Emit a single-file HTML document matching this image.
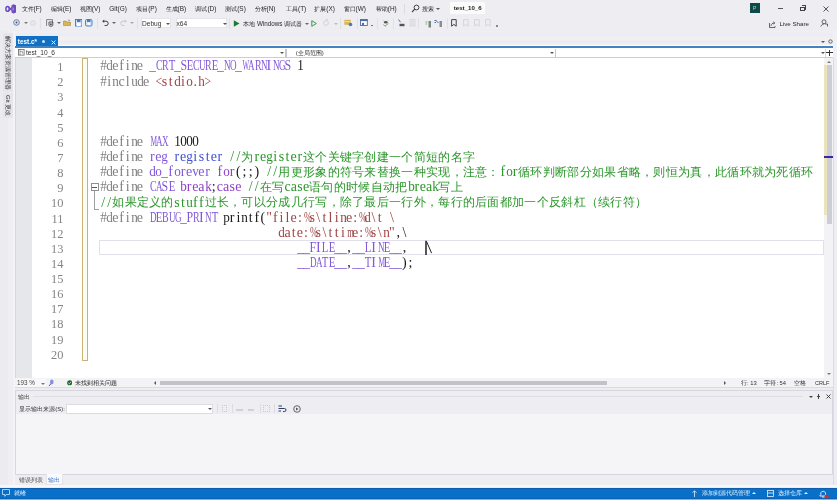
<!DOCTYPE html>
<html><head><meta charset="utf-8">
<style>
*{margin:0;padding:0;box-sizing:border-box}
html,body{width:837px;height:500px;overflow:hidden;background:#eeeef2;font-family:"Liberation Sans",sans-serif;position:relative}
body{filter:blur(0.4px)}
.a{position:absolute}
.t{position:absolute;white-space:nowrap;font-size:6px;line-height:8px;color:#3a3a3a}
.cl{position:absolute;left:100px;height:15px;width:730px}
.la{position:absolute;top:-1.8px;font-family:"Liberation Serif",serif;font-size:14px;line-height:15px;white-space:pre}
.la i{font-style:normal;display:inline-block;width:6.15px;text-align:center}
.la i.n{transform:scaleX(0.78)}
.cj{position:absolute;top:0;font-family:"Liberation Mono",monospace;font-size:12.3px;letter-spacing:0.3px;line-height:15px;white-space:pre}
.nm{position:absolute;left:32px;width:31.5px;height:15px;line-height:15px;text-align:right;font-family:"Liberation Serif",serif;font-size:12.4px;color:#858585}
.sep{position:absolute;width:1px;background:#dcdde3}
.dd{position:absolute;width:0;height:0;border-left:2px solid transparent;border-right:2px solid transparent;border-top:2.6px solid #555}
</style></head><body>
<!-- ===== menu bar ===== -->
<svg class="a" style="left:5px;top:4px" width="12" height="10" viewBox="0 0 12 10">
<ellipse cx="2.6" cy="4.9" rx="1.7" ry="2.4" fill="none" stroke="#6c4cc0" stroke-width="1.5"/>
<path d="M3.5 3.2 L7 6.2 M3.5 6.6 L7 3.6" stroke="#6c4cc0" stroke-width="1.4"/>
<path d="M6.5 1.3 L8.6 0.2 L11 1.3 V8.5 L8.6 9.6 L6.5 8.5 Z" fill="#6c4cc0"/>
<ellipse cx="8.2" cy="5" rx="0.9" ry="1.8" fill="#9c82e0"/>
</svg>
<div class="t" style="left:21.5px;top:4.7px;font-size:6.45px;color:#262626">文件(F)</div>
<div class="t" style="left:50.8px;top:4.7px;font-size:6.45px;color:#262626">编辑(E)</div>
<div class="t" style="left:79.8px;top:4.7px;font-size:6.45px;color:#262626">视图(V)</div>
<div class="t" style="left:109.3px;top:4.7px;font-size:6.45px;color:#262626">Git(G)</div>
<div class="t" style="left:136.2px;top:4.7px;font-size:6.45px;color:#262626">项目(P)</div>
<div class="t" style="left:165.5px;top:4.7px;font-size:6.45px;color:#262626">生成(B)</div>
<div class="t" style="left:195.4px;top:4.7px;font-size:6.45px;color:#262626">调试(D)</div>
<div class="t" style="left:225.2px;top:4.7px;font-size:6.45px;color:#262626">测试(S)</div>
<div class="t" style="left:254.5px;top:4.7px;font-size:6.45px;color:#262626">分析(N)</div>
<div class="t" style="left:286px;top:4.7px;font-size:6.45px;color:#262626">工具(T)</div>
<div class="t" style="left:314.3px;top:4.7px;font-size:6.45px;color:#262626">扩展(X)</div>
<div class="t" style="left:343.5px;top:4.7px;font-size:6.45px;color:#262626">窗口(W)</div>
<div class="t" style="left:375.8px;top:4.7px;font-size:6.45px;color:#262626">帮助(H)</div>
<div class="sep" style="left:403.5px;top:4px;height:10px"></div>
<svg class="a" style="left:411px;top:4px" width="9" height="9" viewBox="0 0 9 9"><circle cx="5.5" cy="3.5" r="2.4" fill="none" stroke="#444" stroke-width="1"/><path d="M3.8 5.2 L1 8" stroke="#444" stroke-width="1.1"/></svg>
<div class="t" style="left:421.6px;top:4.7px;font-size:6.45px;color:#262626">搜索</div>
<div class="dd" style="left:436px;top:8px"></div>
<div class="a" style="left:450px;top:2px;width:35px;height:12px;background:#fbfbfc;border-radius:1px"></div>
<div class="t" style="left:453.8px;top:4px;font-weight:bold;color:#1a1a1a;font-size:6.1px">test_10_6</div>
<div class="a" style="left:749.5px;top:3px;width:10px;height:9.5px;background:#0d4a47"></div>
<div class="t" style="left:752.8px;top:4px;color:#a8cccc;font-size:5.5px">P</div>
<div class="a" style="left:777.5px;top:7.5px;width:5.5px;height:0.9px;background:#555"></div>
<div class="a" style="left:800px;top:6.5px;width:4.5px;height:4.5px;border:1px solid #444"></div>
<div class="a" style="left:801.5px;top:5.2px;width:4.5px;height:4.5px;border-top:1px solid #444;border-right:1px solid #444"></div>
<svg class="a" style="left:822.5px;top:5.5px" width="6" height="6" viewBox="0 0 6 6"><path d="M0.5 0.5 L5.5 5.5 M5.5 0.5 L0.5 5.5" stroke="#444" stroke-width="0.9"/></svg>

<!-- ===== toolbar ===== -->
<svg class="a" style="left:12.8px;top:19.3px" width="7" height="7" viewBox="0 0 7 7"><circle cx="3.5" cy="3.5" r="2.8" fill="#dde6f3" stroke="#60749e" stroke-width="0.9"/><circle cx="3.5" cy="3.5" r="0.9" fill="#3a4f7a"/></svg>
<div class="dd" style="left:23.5px;top:22px;border-top-color:#777"></div>
<svg class="a" style="left:30px;top:19.5px" width="6" height="6" viewBox="0 0 6 6"><circle cx="3" cy="3" r="2.5" fill="#e8e8ec" stroke="#d4d4da" stroke-width="0.8"/></svg>
<div class="sep" style="left:40px;top:18px;height:11px;background:#e0e0e6"></div>
<svg class="a" style="left:46px;top:19px" width="8" height="8" viewBox="0 0 8 8"><path d="M0.6 0.6 H6.5 V4" fill="none" stroke="#777" stroke-width="0.9"/><path d="M0.6 0.6 V7" stroke="#777" stroke-width="0.9"/><path d="M3 3 H6.8 V6.5 C6.8 7.4 3 7.4 3 6.5 Z" fill="none" stroke="#444" stroke-width="0.9"/><circle cx="4.9" cy="5.2" r="0.9" fill="#444"/></svg>
<div class="dd" style="left:57px;top:22px;border-top-color:#666"></div>
<svg class="a" style="left:63px;top:19px" width="8" height="7" viewBox="0 0 8 7"><path d="M0.5 2 H3 L3.8 3 H7.5 V6.5 H0.5 Z" fill="#d8b650" stroke="#9b7e2a" stroke-width="0.5"/><path d="M5 1 L7 1.5" stroke="#5a83c6" stroke-width="0.8"/></svg>
<svg class="a" style="left:74.5px;top:19px" width="7.5" height="7.5" viewBox="0 0 7.5 7.5"><rect x="0.5" y="0.5" width="6.5" height="6.5" fill="#cfe1f5" stroke="#3c78c4" stroke-width="0.9"/><rect x="2" y="0.5" width="3.5" height="2.4" fill="#3c78c4"/><rect x="1.8" y="4.2" width="3.9" height="2.8" fill="#fff"/></svg>
<svg class="a" style="left:85.2px;top:19px" width="7.5" height="7.5" viewBox="0 0 7.5 7.5"><rect x="0.5" y="0.5" width="6.5" height="6.5" rx="1.2" fill="#cfe1f5" stroke="#3c78c4" stroke-width="0.9"/><rect x="2" y="0.5" width="3.5" height="2.4" fill="#3c78c4"/><circle cx="3.8" cy="4.8" r="1.3" fill="#fff"/></svg>
<div class="sep" style="left:96.5px;top:18px;height:11px;background:#e0e0e6"></div>
<svg class="a" style="left:101.5px;top:19px" width="7" height="7" viewBox="0 0 7 7"><path d="M1.2 2.2 H4 A2.2 2.2 0 0 1 4 6.6 H2.5" fill="none" stroke="#444" stroke-width="1"/><path d="M0.2 2.2 L2.2 0.4 V4 Z" fill="#444"/></svg>
<div class="dd" style="left:112px;top:22px;border-top-color:#666"></div>
<svg class="a" style="left:119.5px;top:19px" width="7" height="7" viewBox="0 0 7 7"><path d="M5.8 2.2 H3 A2.2 2.2 0 0 0 3 6.6 H4.5" fill="none" stroke="#c8c8cc" stroke-width="1"/><path d="M6.8 2.2 L4.8 0.4 V4 Z" fill="#c8c8cc"/></svg>
<div class="dd" style="left:129.5px;top:22px;border-top-color:#aaa"></div>
<div class="sep" style="left:136.5px;top:18px;height:11px;background:#e0e0e6"></div>
<div class="a" style="left:141px;top:18px;width:30px;height:10px;background:#fff;border:1px solid #e4e4ea"></div>
<div class="t" style="left:142px;top:19.5px;font-size:6.6px;line-height:8px;color:#333">Debug</div>
<div class="dd" style="left:166px;top:22.5px"></div>
<div class="a" style="left:175.5px;top:18px;width:51.5px;height:10px;background:#fff;border:1px solid #e4e4ea"></div>
<div class="t" style="left:176.5px;top:19.5px;font-size:6.6px;line-height:8px;color:#333">x64</div>
<div class="dd" style="left:222.5px;top:22.5px"></div>
<div class="sep" style="left:229px;top:18px;height:11px;background:#e0e0e6"></div>
<svg class="a" style="left:233px;top:19.5px" width="7" height="7" viewBox="0 0 7 7"><path d="M0.8 0.3 L6.5 3.5 L0.8 6.7 Z" fill="#1f7a30"/></svg>
<div class="t" style="left:243.2px;top:19.5px;color:#2a2a2a;font-size:6.3px">本地 Windows 调试器</div>
<div class="dd" style="left:305px;top:22.5px;border-top-color:#666"></div>
<svg class="a" style="left:311px;top:19.5px" width="6" height="7" viewBox="0 0 6 7"><path d="M0.8 0.7 L5.3 3.5 L0.8 6.3 Z" fill="none" stroke="#2e8b3e" stroke-width="0.9"/></svg>
<svg class="a" style="left:322.5px;top:19px" width="7" height="7" viewBox="0 0 7 7"><circle cx="3" cy="4" r="2.4" fill="none" stroke="#d0d0d4" stroke-width="0.9"/><path d="M3 0.5 L5 0.5" stroke="#d0d0d4" stroke-width="0.9"/></svg>
<div class="dd" style="left:334px;top:22.5px;border-top-color:#bbb"></div>
<div class="sep" style="left:340px;top:18px;height:11px;background:#e0e0e6"></div>
<svg class="a" style="left:344px;top:19px" width="8.5" height="7.5" viewBox="0 0 8.5 7.5"><rect x="0.3" y="0.8" width="6.5" height="5" fill="#d8b650"/><rect x="0.3" y="2.2" width="6.5" height="1" fill="#f0dca0"/><circle cx="6.5" cy="5.5" r="1.8" fill="#4a78c0"/></svg>
<div class="sep" style="left:356.5px;top:18px;height:11px;background:#e0e0e6"></div>
<svg class="a" style="left:359.5px;top:19px" width="8" height="7.5" viewBox="0 0 8 7.5"><rect x="0.5" y="0.5" width="6.8" height="6" fill="#fff" stroke="#4c6aa8" stroke-width="0.9"/><rect x="0.5" y="0.5" width="6.8" height="1.6" fill="#4c6aa8"/><circle cx="3" cy="5" r="1.2" fill="#4c6aa8"/></svg>
<div class="a" style="left:371px;top:25px;width:2px;height:1px;background:#777"></div>
<div class="sep" style="left:377px;top:18px;height:11px;background:#e0e0e6"></div>
<svg class="a" style="left:381.5px;top:19px" width="7.5" height="8.5" viewBox="0 0 7.5 8.5"><path d="M1.5 1.5 L2.5 2.5 M6 1.5 L5 2.5" stroke="#777" stroke-width="0.6"/><ellipse cx="3.75" cy="3.2" rx="1.8" ry="1.3" fill="#555"/><path d="M1.5 5.5 L3 7.3 L6.5 4.3" stroke="#5aa05a" stroke-width="0.9" fill="none"/></svg>
<div class="sep" style="left:392.5px;top:18px;height:11px;background:#e0e0e6"></div>
<svg class="a" style="left:397px;top:19px" width="8" height="8" viewBox="0 0 8 8"><path d="M1.5 0.5 L3.5 3.2" stroke="#3c70c0" stroke-width="1"/><rect x="2.5" y="4.8" width="5" height="2.4" fill="#555"/></svg>
<svg class="a" style="left:408.5px;top:19px" width="7" height="7.5" viewBox="0 0 7 7.5"><path d="M1 0.5 H3 V7 H1 Z M4 0.5 H6 V7 H4 Z" fill="none" stroke="#d2d2d8" stroke-width="0.8"/></svg>
<div class="sep" style="left:418px;top:18px;height:11px;background:#e0e0e6"></div>
<svg class="a" style="left:424.5px;top:19.5px" width="7" height="8" viewBox="0 0 7 8"><path d="M0.5 2 H2.5 M0.5 4 H2" stroke="#7ab07a" stroke-width="1"/><path d="M3.5 1 H6 V7.5 H3.5 Z" fill="#7a8a7a"/></svg>
<svg class="a" style="left:434px;top:19px" width="9" height="8.5" viewBox="0 0 9 8.5"><path d="M0.5 1.5 H2.5 M0.5 3.5 H2 M2 1.5 L4.5 4" stroke="#4a70b0" stroke-width="1"/><path d="M5.5 2 H8 V8 H5.5 Z" fill="#8a8a92"/></svg>
<div class="sep" style="left:446.5px;top:18px;height:11px;background:#e0e0e6"></div>
<svg class="a" style="left:450.5px;top:19px" width="6" height="8" viewBox="0 0 6 8"><path d="M0.6 0.6 H5.2 V7.2 L2.9 5.4 L0.6 7.2 Z" fill="none" stroke="#444" stroke-width="1"/></svg>
<svg class="a" style="left:462.5px;top:19px" width="7" height="8" viewBox="0 0 7 8"><path d="M0.6 0.6 H5.2 V7.2 L2.9 5.4 L0.6 7.2 Z" fill="none" stroke="#d4d4da" stroke-width="1"/></svg>
<svg class="a" style="left:473.5px;top:19px" width="7" height="8" viewBox="0 0 7 8"><path d="M0.6 0.6 H5.2 V7.2 L2.9 5.4 L0.6 7.2 Z" fill="none" stroke="#d4d4da" stroke-width="1"/></svg>
<svg class="a" style="left:484.5px;top:19px" width="7" height="8" viewBox="0 0 7 8"><path d="M0.6 0.6 H5.2 V7.2 L2.9 5.4 L0.6 7.2 Z" fill="none" stroke="#d4d4da" stroke-width="1"/></svg>
<div class="a" style="left:495.5px;top:25px;width:2px;height:1.5px;background:#888"></div>
<!-- live share -->
<svg class="a" style="left:769px;top:20.5px" width="7" height="7" viewBox="0 0 7 7"><path d="M0.5 2 V6.5 H6 V5" fill="none" stroke="#444" stroke-width="0.8"/><path d="M2 5 C2 3 3.5 2 5.5 2 M4.3 0.8 L5.8 2 L4.3 3.2" fill="none" stroke="#444" stroke-width="0.8"/></svg>
<div class="t" style="left:779.4px;top:20px;color:#2a2a2a;font-size:6.2px">Live Share</div>
<svg class="a" style="left:819.5px;top:19px" width="8" height="8" viewBox="0 0 8 8"><circle cx="4" cy="2.8" r="2" fill="none" stroke="#444" stroke-width="0.8"/><path d="M0.8 7.5 C1.5 5.5 3 5 4 5" fill="none" stroke="#444" stroke-width="0.8"/><path d="M5 5 H7.5 V7.5" fill="none" stroke="#444" stroke-width="0.8"/></svg>

<!-- ===== tab well ===== -->
<div class="a" style="left:15px;top:31px;width:819px;height:15px;background:linear-gradient(#eeeef3 0,#eeeef3 1.5px,#e8edf6 2.5px,#e8edf6 5px,#f5efea 6px,#f5efea 9px,#e7eef8 10px,#e7eef8 11.5px,#f6efe9 12px,#f6efe9 13.5px,#fbfbfd 14px)"></div>
<div class="a" style="left:16px;top:36px;width:42px;height:10px;background:#1170c4"></div>
<div class="t" style="left:17.8px;top:38px;color:#fff;font-weight:bold;font-size:6.4px">test.c*</div>
<div class="a" style="left:42.3px;top:40.3px;width:3.2px;height:3.2px;border-radius:50%;background:#cfe2f6"></div>
<svg class="a" style="left:50.5px;top:39.8px" width="5" height="5" viewBox="0 0 5 5"><path d="M0.6 0.6 L4.4 4.4 M4.4 0.6 L0.6 4.4" stroke="#e8f2fb" stroke-width="1"/></svg>
<div class="dd" style="left:820.5px;top:41px;border-top-color:#555"></div>
<svg class="a" style="left:828px;top:38.5px" width="5" height="5" viewBox="0 0 5 5"><circle cx="2.5" cy="2.5" r="1.7" fill="none" stroke="#666" stroke-width="1"/></svg>
<div class="a" style="left:15px;top:46px;width:819px;height:2px;background:#4383c2"></div>

<!-- ===== nav bar ===== -->
<div class="a" style="left:15px;top:48px;width:819px;height:10px;background:#fff;border-bottom:1.3px solid #cdcdd5"></div>
<svg class="a" style="left:18px;top:49.3px" width="6.5" height="6.5" viewBox="0 0 6.5 6.5"><rect x="0.4" y="0.4" width="5.7" height="5.7" fill="none" stroke="#666" stroke-width="0.8"/><path d="M2 0.4 V6 M2 2.6 H4.5 V4.5" stroke="#666" stroke-width="0.6" fill="none"/></svg>
<div class="t" style="left:26px;top:49px;color:#333;font-size:6.6px">test_10_6</div>
<div class="dd" style="left:280px;top:52px"></div>
<div class="sep" style="left:285px;top:48.5px;width:1.5px;height:8.5px;background:#c6c6ce"></div>
<div class="t" style="left:295.8px;top:49px;color:#333">(全局范围)</div>
<div class="dd" style="left:549.5px;top:52px"></div>
<div class="sep" style="left:554.8px;top:48.5px;width:1.5px;height:8.5px;background:#c6c6ce"></div>
<div class="dd" style="left:820.5px;top:52px"></div>
<div class="sep" style="left:825px;top:48.5px;height:8.5px;background:#d6d7de"></div>
<div class="a" style="left:826.3px;top:51.9px;width:6.4px;height:1.6px;background:#333"></div>
<div class="a" style="left:828.7px;top:49.5px;width:1.6px;height:6.4px;background:#333"></div>

<!-- ===== left sidebar ===== -->
<div class="a" style="left:0;top:31px;width:15px;height:456px;background:#ececf0"></div>
<div class="a" style="left:8px;top:31px;width:5px;height:456px;background:#efeff3"></div><div class="a" style="left:12.5px;top:31px;width:2.5px;height:456px;background:#f4f4f7"></div>
<div class="a" style="left:3px;top:33px;width:10px;height:59px;background:#e5e5eb"></div><div class="a" style="left:3px;top:93px;width:10px;height:25px;background:#e5e5eb"></div>
<div class="t" style="left:11px;top:35.5px;transform-origin:0 0;transform:rotate(90deg);font-size:6.1px;line-height:6px;color:#333">解决方案资源管理器</div>
<div class="t" style="left:11px;top:95px;transform-origin:0 0;transform:rotate(90deg);font-size:6.1px;line-height:6px;color:#333">Git 更改</div>

<!-- ===== editor ===== -->
<div class="a" style="left:15px;top:58px;width:809px;height:320px;background:#fff;border-left:1px solid #d6d7de"></div>
<div class="a" style="left:16px;top:58px;width:15.5px;height:320px;background:#e6e7ea"></div>
<div class="nm" style="top:60.20px">1</div><div class="nm" style="top:75.33px">2</div><div class="nm" style="top:90.46px">3</div><div class="nm" style="top:105.59px">4</div><div class="nm" style="top:120.72px">5</div><div class="nm" style="top:135.85px">6</div><div class="nm" style="top:150.98px">7</div><div class="nm" style="top:166.11px">8</div><div class="nm" style="top:181.24px">9</div><div class="nm" style="top:196.37px">10</div><div class="nm" style="top:211.50px">11</div><div class="nm" style="top:226.63px">12</div><div class="nm" style="top:241.76px">13</div><div class="nm" style="top:256.89px">14</div><div class="nm" style="top:272.02px">15</div><div class="nm" style="top:287.15px">16</div><div class="nm" style="top:302.28px">17</div><div class="nm" style="top:317.41px">18</div><div class="nm" style="top:332.54px">19</div><div class="nm" style="top:347.67px">20</div>
<div class="a" style="left:82.2px;top:58px;width:6px;height:302.5px;border:1.6px solid #c9b272;background:#fdfcf6"></div>
<!-- outline -->
<div class="a" style="left:90.5px;top:183px;width:8px;height:8px;border:1px solid #8f8f8f;background:#fff"></div>
<div class="a" style="left:92.2px;top:186.5px;width:4.5px;height:1px;background:#555"></div>
<div class="a" style="left:94px;top:191px;width:1px;height:18px;background:#a0a0a0"></div>
<div class="a" style="left:94px;top:208.5px;width:4.5px;height:1px;background:#a0a0a0"></div>
<!-- current line -->
<div class="a" style="left:99px;top:240px;width:724.5px;height:15px;border:1.5px solid #e0e0ea"></div>
<div class="cl" style="top:60.20px"><span class="la" style="left:0.00px;color:#808080"><i style="transform:scaleX(0.94)">#</i><i style="transform:scaleX(0.94)">d</i><i>e</i><i>f</i><i>i</i><i style="transform:scaleX(0.94)">n</i><i>e</i><i> </i></span><span class="la" style="left:49.20px;color:#8258d8"><i style="transform:scaleX(0.94)">_</i><i style="transform:scaleX(0.71)">C</i><i style="transform:scaleX(0.71)">R</i><i style="transform:scaleX(0.77)">T</i><i style="transform:scaleX(0.94)">_</i><i style="transform:scaleX(0.85)">S</i><i style="transform:scaleX(0.77)">E</i><i style="transform:scaleX(0.71)">C</i><i style="transform:scaleX(0.65)">U</i><i style="transform:scaleX(0.71)">R</i><i style="transform:scaleX(0.77)">E</i><i style="transform:scaleX(0.94)">_</i><i style="transform:scaleX(0.65)">N</i><i style="transform:scaleX(0.65)">O</i><i style="transform:scaleX(0.94)">_</i><i style="transform:scaleX(0.50)">W</i><i style="transform:scaleX(0.65)">A</i><i style="transform:scaleX(0.71)">R</i><i style="transform:scaleX(0.65)">N</i><i>I</i><i style="transform:scaleX(0.65)">N</i><i style="transform:scaleX(0.65)">G</i><i style="transform:scaleX(0.85)">S</i></span><span class="la" style="left:190.65px;color:#1a1a1a"><i> </i><i style="transform:scaleX(0.94)">1</i></span></div>
<div class="cl" style="top:75.33px"><span class="la" style="left:0.00px;color:#808080"><i style="transform:scaleX(0.94)">#</i><i>i</i><i style="transform:scaleX(0.94)">n</i><i>c</i><i>l</i><i style="transform:scaleX(0.94)">u</i><i style="transform:scaleX(0.94)">d</i><i>e</i><i> </i></span><span class="la" style="left:55.35px;color:#a04444"><i style="transform:scaleX(0.84)">&lt;</i><i>s</i><i>t</i><i style="transform:scaleX(0.94)">d</i><i>i</i><i style="transform:scaleX(0.94)">o</i><i>.</i><i style="transform:scaleX(0.94)">h</i><i style="transform:scaleX(0.84)">&gt;</i></span></div>
<div class="cl" style="top:90.46px"></div>
<div class="cl" style="top:105.59px"></div>
<div class="cl" style="top:120.72px"></div>
<div class="cl" style="top:135.85px"><span class="la" style="left:0.00px;color:#808080"><i style="transform:scaleX(0.94)">#</i><i style="transform:scaleX(0.94)">d</i><i>e</i><i>f</i><i>i</i><i style="transform:scaleX(0.94)">n</i><i>e</i><i> </i></span><span class="la" style="left:49.20px;color:#8258d8"><i style="transform:scaleX(0.53)">M</i><i style="transform:scaleX(0.65)">A</i><i style="transform:scaleX(0.65)">X</i></span><span class="la" style="left:67.65px;color:#1a1a1a"><i> </i><i style="transform:scaleX(0.94)">1</i><i style="transform:scaleX(0.94)">0</i><i style="transform:scaleX(0.94)">0</i><i style="transform:scaleX(0.94)">0</i></span></div>
<div class="cl" style="top:150.98px"><span class="la" style="left:0.00px;color:#808080"><i style="transform:scaleX(0.94)">#</i><i style="transform:scaleX(0.94)">d</i><i>e</i><i>f</i><i>i</i><i style="transform:scaleX(0.94)">n</i><i>e</i><i> </i></span><span class="la" style="left:49.20px;color:#8258d8"><i>r</i><i>e</i><i style="transform:scaleX(0.94)">g</i></span><span class="la" style="left:73.80px;color:#4050d0"><i>r</i><i>e</i><i style="transform:scaleX(0.94)">g</i><i>i</i><i>s</i><i>t</i><i>e</i><i>r</i></span><span class="la" style="left:123.00px;color:#2a962a"><i> </i><i>/</i><i>/</i></span><span class="cj" style="left:141.45px;color:#2a962a">为</span><span class="la" style="left:153.75px;color:#2a962a"><i>r</i><i>e</i><i style="transform:scaleX(0.94)">g</i><i>i</i><i>s</i><i>t</i><i>e</i><i>r</i></span><span class="cj" style="left:202.95px;color:#2a962a">这个关键字创建一个简短的名字</span></div>
<div class="cl" style="top:166.11px"><span class="la" style="left:0.00px;color:#808080"><i style="transform:scaleX(0.94)">#</i><i style="transform:scaleX(0.94)">d</i><i>e</i><i>f</i><i>i</i><i style="transform:scaleX(0.94)">n</i><i>e</i><i> </i></span><span class="la" style="left:49.20px;color:#8258d8"><i style="transform:scaleX(0.94)">d</i><i style="transform:scaleX(0.94)">o</i><i style="transform:scaleX(0.94)">_</i><i>f</i><i style="transform:scaleX(0.94)">o</i><i>r</i><i>e</i><i style="transform:scaleX(0.94)">v</i><i>e</i><i>r</i></span><span class="la" style="left:116.85px;color:#9040c8"><i>f</i><i style="transform:scaleX(0.94)">o</i><i>r</i></span><span class="la" style="left:135.30px;color:#1a1a1a"><i>(</i><i>;</i><i>;</i><i>)</i></span><span class="la" style="left:159.90px;color:#2a962a"><i> </i><i>/</i><i>/</i></span><span class="cj" style="left:178.35px;color:#2a962a">用更形象的符号来替换一种实现，注意：</span><span class="la" style="left:399.75px;color:#2a962a"><i>f</i><i style="transform:scaleX(0.94)">o</i><i>r</i></span><span class="cj" style="left:418.20px;color:#2a962a">循环判断部分如果省略，则恒为真，此循环就为死循环</span></div>
<div class="cl" style="top:181.24px"><span class="la" style="left:0.00px;color:#808080"><i style="transform:scaleX(0.94)">#</i><i style="transform:scaleX(0.94)">d</i><i>e</i><i>f</i><i>i</i><i style="transform:scaleX(0.94)">n</i><i>e</i><i> </i></span><span class="la" style="left:49.20px;color:#8258d8"><i style="transform:scaleX(0.71)">C</i><i style="transform:scaleX(0.65)">A</i><i style="transform:scaleX(0.85)">S</i><i style="transform:scaleX(0.77)">E</i></span><span class="la" style="left:79.95px;color:#9040c8"><i style="transform:scaleX(0.94)">b</i><i>r</i><i>e</i><i>a</i><i style="transform:scaleX(0.94)">k</i></span><span class="la" style="left:110.70px;color:#1a1a1a"><i>;</i></span><span class="la" style="left:116.85px;color:#9040c8"><i>c</i><i>a</i><i>s</i><i>e</i></span><span class="la" style="left:141.45px;color:#2a962a"><i> </i><i>/</i><i>/</i></span><span class="cj" style="left:159.90px;color:#2a962a">在写</span><span class="la" style="left:184.50px;color:#2a962a"><i>c</i><i>a</i><i>s</i><i>e</i></span><span class="cj" style="left:209.10px;color:#2a962a">语句的时候自动把</span><span class="la" style="left:307.50px;color:#2a962a"><i style="transform:scaleX(0.94)">b</i><i>r</i><i>e</i><i>a</i><i style="transform:scaleX(0.94)">k</i></span><span class="cj" style="left:338.25px;color:#2a962a">写上</span></div>
<div class="cl" style="top:196.37px"><span class="la" style="left:0.00px;color:#2a962a"><i>/</i><i>/</i></span><span class="cj" style="left:12.30px;color:#2a962a">如果定义的</span><span class="la" style="left:73.80px;color:#2a962a"><i>s</i><i>t</i><i style="transform:scaleX(0.94)">u</i><i>f</i><i>f</i></span><span class="cj" style="left:104.55px;color:#2a962a">过长，可以分成几行写，除了最后一行外，每行的后面都加一个反斜杠（续行符）</span></div>
<div class="cl" style="top:211.50px"><span class="la" style="left:0.00px;color:#808080"><i style="transform:scaleX(0.94)">#</i><i style="transform:scaleX(0.94)">d</i><i>e</i><i>f</i><i>i</i><i style="transform:scaleX(0.94)">n</i><i>e</i><i> </i></span><span class="la" style="left:49.20px;color:#8258d8"><i style="transform:scaleX(0.65)">D</i><i style="transform:scaleX(0.77)">E</i><i style="transform:scaleX(0.71)">B</i><i style="transform:scaleX(0.65)">U</i><i style="transform:scaleX(0.65)">G</i><i style="transform:scaleX(0.94)">_</i><i style="transform:scaleX(0.85)">P</i><i style="transform:scaleX(0.71)">R</i><i>I</i><i style="transform:scaleX(0.65)">N</i><i style="transform:scaleX(0.77)">T</i></span><span class="la" style="left:116.85px;color:#1a1a1a"><i> </i><i style="transform:scaleX(0.94)">p</i><i>r</i><i>i</i><i style="transform:scaleX(0.94)">n</i><i>t</i><i>f</i><i>(</i></span><span class="la" style="left:166.05px;color:#a04444"><i>&quot;</i><i>f</i><i>i</i><i>l</i><i>e</i><i>:</i><i style="transform:scaleX(0.68)">%</i><i>s</i><i>\</i><i>t</i><i>l</i><i>i</i><i style="transform:scaleX(0.94)">n</i><i>e</i><i>:</i><i style="transform:scaleX(0.68)">%</i><i style="transform:scaleX(0.94)">d</i><i>\</i><i>t</i><i> </i><i>\</i></span></div>
<div class="cl" style="top:226.63px"><span class="la" style="left:178.35px;color:#a04444"><i style="transform:scaleX(0.94)">d</i><i>a</i><i>t</i><i>e</i><i>:</i><i style="transform:scaleX(0.68)">%</i><i>s</i><i>\</i><i>t</i><i>t</i><i>i</i><i style="transform:scaleX(0.61)">m</i><i>e</i><i>:</i><i style="transform:scaleX(0.68)">%</i><i>s</i><i>\</i><i style="transform:scaleX(0.94)">n</i><i>&quot;</i></span><span class="la" style="left:295.20px;color:#1a1a1a"><i>,</i><i>\</i></span></div>
<div class="cl" style="top:241.76px"><span class="la" style="left:196.80px;color:#8258d8"><i style="transform:scaleX(0.94)">_</i><i style="transform:scaleX(0.94)">_</i><i style="transform:scaleX(0.85)">F</i><i>I</i><i style="transform:scaleX(0.77)">L</i><i style="transform:scaleX(0.77)">E</i><i style="transform:scaleX(0.94)">_</i><i style="transform:scaleX(0.94)">_</i></span><span class="la" style="left:246.00px;color:#1a1a1a"><i>,</i></span><span class="la" style="left:252.15px;color:#8258d8"><i style="transform:scaleX(0.94)">_</i><i style="transform:scaleX(0.94)">_</i><i style="transform:scaleX(0.77)">L</i><i>I</i><i style="transform:scaleX(0.65)">N</i><i style="transform:scaleX(0.77)">E</i><i style="transform:scaleX(0.94)">_</i><i style="transform:scaleX(0.94)">_</i></span><span class="la" style="left:301.35px;color:#1a1a1a"><i>,</i></span></div>
<div class="cl" style="top:256.89px"><span class="la" style="left:196.80px;color:#8258d8"><i style="transform:scaleX(0.94)">_</i><i style="transform:scaleX(0.94)">_</i><i style="transform:scaleX(0.65)">D</i><i style="transform:scaleX(0.65)">A</i><i style="transform:scaleX(0.77)">T</i><i style="transform:scaleX(0.77)">E</i><i style="transform:scaleX(0.94)">_</i><i style="transform:scaleX(0.94)">_</i></span><span class="la" style="left:246.00px;color:#1a1a1a"><i>,</i></span><span class="la" style="left:252.15px;color:#8258d8"><i style="transform:scaleX(0.94)">_</i><i style="transform:scaleX(0.94)">_</i><i style="transform:scaleX(0.77)">T</i><i>I</i><i style="transform:scaleX(0.53)">M</i><i style="transform:scaleX(0.77)">E</i><i style="transform:scaleX(0.94)">_</i><i style="transform:scaleX(0.94)">_</i></span><span class="la" style="left:301.35px;color:#1a1a1a"><i>)</i><i>;</i></span></div>
<div class="cl" style="top:272.02px"></div>
<div class="cl" style="top:287.15px"></div>
<div class="cl" style="top:302.28px"></div>
<div class="cl" style="top:317.41px"></div>
<div class="cl" style="top:332.54px"></div>
<div class="cl" style="top:347.67px"></div>
<svg class="a" style="left:424px;top:239.5px" width="10" height="16" viewBox="0 0 10 16"><path d="M2 0.8 V15" stroke="#111" stroke-width="1.4"/><path d="M2.6 1.5 L7.6 13.2" stroke="#222" stroke-width="1"/></svg>
<!-- vertical scrollbar -->
<div class="a" style="left:824px;top:58px;width:9px;height:320px;background:#f3f3f5"></div>
<div class="a" style="left:826.5px;top:61px;width:0;height:0;border-left:2.5px solid transparent;border-right:2.5px solid transparent;border-bottom:2.5px solid #777"></div>
<div class="a" style="left:824px;top:65px;width:3px;height:150px;background:#ebe4bb"></div>
<div class="a" style="left:827px;top:65px;width:4.5px;height:159px;background:#cccdd5"></div>
<div class="a" style="left:824px;top:155.8px;width:9.5px;height:2px;background:#3428a8"></div>
<div class="a" style="left:826.5px;top:372.5px;width:0;height:0;border-left:2.5px solid transparent;border-right:2.5px solid transparent;border-top:2.5px solid #777"></div>
<div class="a" style="left:833px;top:31px;width:4px;height:27px;background:#f1f1f5"></div><div class="a" style="left:833px;top:58px;width:4px;height:429px;background:#eeeef2;border-left:1px solid #dcdce2"></div>

<!-- ===== editor status bar ===== -->
<div class="a" style="left:15px;top:378px;width:818px;height:10px;background:#f3f3f6;border-bottom:1px solid #dadae0"></div>
<div class="a" style="left:16.5px;top:378.5px;width:29px;height:8.5px;background:#f8f8fa"></div>
<div class="t" style="left:17px;top:379px;font-size:6.3px;color:#444">193 %</div>
<div class="dd" style="left:41px;top:382.5px;border-top-color:#777"></div>
<svg class="a" style="left:47px;top:379px" width="7" height="8" viewBox="0 0 7 8"><path d="M2 7 L4.5 4" stroke="#5a5ac0" stroke-width="1"/><ellipse cx="4.8" cy="3" rx="1.8" ry="2.4" fill="#8c8ce0"/></svg>
<svg class="a" style="left:66.5px;top:380px" width="5.5" height="5.5" viewBox="0 0 5.5 5.5"><circle cx="2.75" cy="2.75" r="2.6" fill="#1a6a2a"/><path d="M1.3 2.8 L2.4 3.8 L4.2 1.8" stroke="#fff" stroke-width="0.7" fill="none"/></svg>
<div class="t" style="left:75.2px;top:379px;font-size:5.5px;color:#222">未找到相关问题</div>
<div class="a" style="left:153.5px;top:381px;width:0;height:0;border-top:2px solid transparent;border-bottom:2px solid transparent;border-right:2.5px solid #555"></div>
<div class="a" style="left:159.5px;top:380.8px;width:447.5px;height:4px;background:#c2c3c9"></div>
<div class="a" style="left:724px;top:381px;width:0;height:0;border-top:2px solid transparent;border-bottom:2px solid transparent;border-left:2.5px solid #555"></div>
<div class="t" style="left:741px;top:379px;font-size:5.8px;color:#333">行: 13</div>
<div class="t" style="left:764.4px;top:379px;font-size:5.8px;color:#333">字符: 54</div>
<div class="t" style="left:794.4px;top:379px;font-size:5.8px;color:#333">空格</div>
<div class="t" style="left:815px;top:379px;font-size:5.5px;color:#333">CRLF</div>

<!-- ===== output panel ===== -->
<div class="a" style="left:15px;top:389.5px;width:818px;height:85px;background:#eeeef2;border:1px solid #d6d7de"></div>
<div class="t" style="left:18px;top:392.5px;font-size:6.2px;color:#444">输出</div>
<div class="a" style="left:33px;top:396px;width:770px;height:1px;background:#dedee4"></div>
<div class="dd" style="left:809px;top:395.5px;border-top-color:#444"></div>
<div class="a" style="left:818px;top:393.5px;width:1.3px;height:5px;background:#444"></div>
<div class="a" style="left:816.8px;top:395.5px;width:3.5px;height:1px;background:#444"></div>
<svg class="a" style="left:825.5px;top:394px" width="5" height="5" viewBox="0 0 5 5"><path d="M0.5 0.5 L4.5 4.5 M4.5 0.5 L0.5 4.5" stroke="#333" stroke-width="0.9"/></svg>
<div class="t" style="left:19.3px;top:405px;font-size:5.9px;color:#333">显示输出来源(S):</div>
<div class="a" style="left:66px;top:404px;width:146.5px;height:9.5px;background:#fff;border:1px solid #dcdce2"></div>
<div class="dd" style="left:207.5px;top:407.5px;border-top-color:#555"></div>
<div class="sep" style="left:216.5px;top:404px;height:9px;background:#dcdce2"></div>
<div class="a" style="left:221.5px;top:405px;width:5px;height:7px;border:1px dotted #c8c8d0"></div>
<div class="sep" style="left:231.5px;top:404px;height:9px;background:#dcdce2"></div>
<div class="a" style="left:236px;top:409px;width:7px;height:2px;background:#d0d0d6"></div>
<div class="a" style="left:247.5px;top:409px;width:6px;height:2px;background:#d0d0d6"></div>
<div class="sep" style="left:259.5px;top:404px;height:9px;background:#dcdce2"></div>
<div class="a" style="left:262.5px;top:405px;width:7px;height:7px;border:1px dotted #c8c8d0"></div>
<div class="sep" style="left:273.8px;top:404px;height:9px;background:#dcdce2"></div>
<svg class="a" style="left:277.5px;top:405px" width="9" height="7" viewBox="0 0 9 7"><path d="M0.5 1 H4 M0.5 3.5 H6.5 A1.5 1.5 0 0 1 6.5 6.5 H5 M0.5 6 H3" stroke="#2c3e6a" stroke-width="1" fill="none"/></svg>
<svg class="a" style="left:293px;top:404.5px" width="8" height="8" viewBox="0 0 8 8"><circle cx="4" cy="4" r="3.3" fill="none" stroke="#555" stroke-width="0.9"/><path d="M3 2.5 L5.5 4 L3 5.5 Z" fill="#555"/></svg>
<div class="a" style="left:16px;top:414px;width:816px;height:60px;background:#f5f5f7"></div>
<div class="a" style="left:0;top:485px;width:837px;height:2px;background:#f7f7fa"></div>
<!-- bottom tabs -->
<div class="t" style="left:19px;top:476px;font-size:6.2px;color:#444">错误列表</div>
<div class="a" style="left:45.5px;top:474px;width:17px;height:11px;background:#fafafc;border:1px solid #e2e2e8;border-top:none"></div>
<div class="t" style="left:48px;top:476px;font-size:6.2px;color:#3c7ad0">输出</div>

<!-- ===== status bar ===== -->
<div class="a" style="left:0;top:487.5px;width:837px;height:11.5px;background:#0870c8"></div>
<div class="a" style="left:0;top:487.5px;width:837px;height:1px;background:#0b5fae"></div>
<div class="a" style="left:0;top:498px;width:837px;height:1px;background:#0a62b4"></div>
<div class="a" style="left:0;top:499px;width:837px;height:1px;background:#6cbcf4"></div>
<svg class="a" style="left:2px;top:489px" width="8.5" height="8" viewBox="0 0 8.5 8"><path d="M0.5 0.5 H7.5 V5.5 H4.3 L2.8 7.3 V5.5 H0.5 Z" fill="none" stroke="#cfe6fb" stroke-width="0.8"/></svg>
<div class="t" style="left:14px;top:489px;font-size:6.2px;color:#e6f2fc">就绪</div>
<svg class="a" style="left:692px;top:489.5px" width="5" height="7" viewBox="0 0 5 7"><path d="M2.5 7 V0.8 M0.5 2.8 L2.5 0.8 L4.5 2.8" stroke="#e6f2fc" stroke-width="0.8" fill="none"/></svg>
<div class="t" style="left:702px;top:489px;font-size:6.2px;color:#e6f2fc">添加到源代码管理</div>
<div class="a" style="left:752px;top:491.5px;width:0;height:0;border-left:2px solid transparent;border-right:2px solid transparent;border-bottom:2.6px solid #e6f2fc"></div>
<svg class="a" style="left:767px;top:489.5px" width="7" height="7" viewBox="0 0 7 7"><rect x="0.5" y="0.5" width="6" height="6" fill="none" stroke="#e6f2fc" stroke-width="0.8"/><path d="M0.5 3 H6.5" stroke="#e6f2fc" stroke-width="0.8"/></svg>
<div class="t" style="left:777.6px;top:489px;font-size:6.2px;color:#e6f2fc">选择仓库</div>
<div class="a" style="left:804px;top:491.5px;width:0;height:0;border-left:2px solid transparent;border-right:2px solid transparent;border-bottom:2.6px solid #e6f2fc"></div>
<svg class="a" style="left:819px;top:488.5px" width="10" height="10" viewBox="0 0 10 10"><path d="M0.8 7 H7.5 L6.5 5.5 V3.8 A2.6 2.6 0 0 0 1.8 3.8 V5.5 Z M3 8 H5.5" fill="none" stroke="#e6f2fc" stroke-width="0.9"/><circle cx="7.6" cy="7.6" r="2" fill="#d0302c"/></svg>
</body></html>
